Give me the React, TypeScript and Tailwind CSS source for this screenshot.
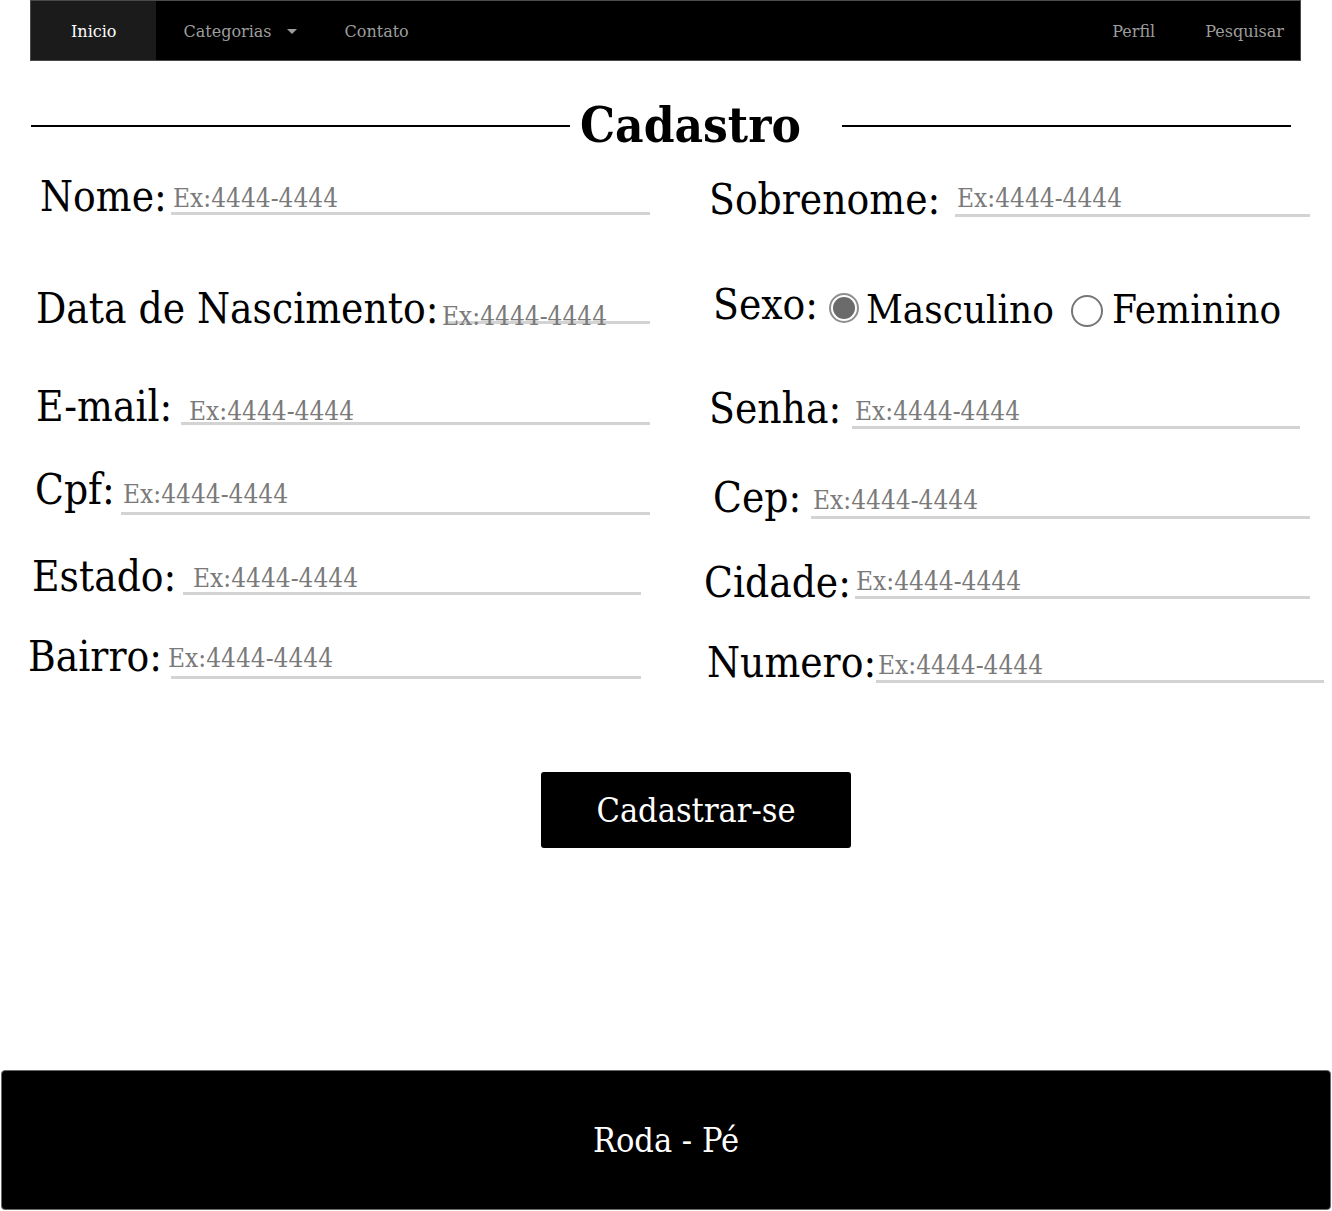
const serif = "font-['DejaVu_Serif',serif] [font-stretch:condensed]";

function Navbar() {
  return (
    <nav className="ml-[30px] flex h-[61px] w-[1271px] border border-[#4a4a4a] bg-black font-['DejaVu_Serif',serif] text-[16px] text-[#9d9d9d] [font-stretch:normal]">
      <a className="flex items-center bg-[#1b1b1b] px-[40px] pt-[2px] text-white">Inicio</a>
      <a className="ml-[27px] flex items-center pt-[2px]">
        Categorias
        <span className="ml-[15px] h-0 w-0 border-x-[5px] border-t-[5px] border-x-transparent border-t-[#9d9d9d]" />
      </a>
      <a className="ml-[48px] flex items-center pt-[2px]">Contato</a>
      <div className="ml-auto flex">
        <a className="flex items-center pt-[2px]">Perfil</a>
        <a className="ml-[50px] mr-[16px] flex items-center pt-[2px]">Pesquisar</a>
      </div>
    </nav>
  );
}

type FieldProps = {
  label: string;
  labelCls: string;
  inputCls: string;
  phCls: string;
};

function Field({ label, labelCls, inputCls, phCls }: FieldProps) {
  return (
    <div className="flex items-start">
      <span className={`shrink-0 whitespace-nowrap text-[42px] leading-[42px] text-black ${labelCls}`}>{label}</span>
      <div className={`h-[30px] shrink-0 border-b-[3px] border-[#d3d3d3] ${inputCls}`}>
        <span className={`block whitespace-nowrap text-[26px] leading-[26px] text-[#7a7a7a] ${phCls}`}>Ex:4444-4444</span>
      </div>
    </div>
  );
}

function Radio({ checked }: { checked?: boolean }) {
  if (checked) {
    return (
      <span className="flex h-[30px] w-[30px] items-center justify-center rounded-full border-2 border-[#8f8f8f] bg-white">
        <span className="h-[22px] w-[22px] rounded-full bg-[#6b6b6b]" />
      </span>
    );
  }
  return <span className="block h-[32px] w-[32px] rounded-full border-2 border-[#767676] bg-white" />;
}

export default function App() {
  return (
    <div className={`min-h-[1211px] bg-white ${serif}`}>
      <Navbar />

      <div className="flex h-[99px] items-start">
        <div className="mt-[40px] flex items-center">
          <span className="ml-[31px] h-[2px] w-[539px] bg-black" />
          <h1 className="ml-[10px] text-[49px] font-bold leading-[49px] text-black">Cadastro</h1>
          <span className="ml-[41px] h-[2px] w-[449px] bg-black" />
        </div>
      </div>

      <div className="flex flex-col">
        <div className="flex h-[110px]">
          <div className="w-[700px]">
            <Field label="Nome:" labelCls="ml-[40px] mt-[16px] w-[131px]" inputCls="mt-[25px] w-[479px]" phCls="ml-[2px]" />
          </div>
          <Field label="Sobrenome:" labelCls="ml-[9px] mt-[19px] w-[246px]" inputCls="mt-[27px] w-[355px]" phCls="ml-[2px] -mt-[2px]" />
        </div>

        <div className="flex h-[100px]">
          <div className="w-[700px]">
            <Field label="Data de Nascimento:" labelCls="ml-[36px] mt-[18px] w-[411px]" inputCls="mt-[24px] w-[203px]" phCls="-ml-[5px] mt-[9px]" />
          </div>
          <div className="flex items-start">
            <span className="ml-[13px] mt-[14px] w-[116px] shrink-0 text-[42px] leading-[42px] text-black">Sexo:</span>
            <span className="mt-[23px]">
              <Radio checked />
            </span>
            <span className="ml-[7px] mt-[19px] text-[40px] leading-[40px] text-black">Masculino</span>
            <span className="ml-[17px] mt-[25px]">
              <Radio />
            </span>
            <span className="ml-[9px] mt-[19px] text-[40px] leading-[40px] text-black">Feminino</span>
          </div>
        </div>

        <div className="flex h-[85px]">
          <div className="w-[700px]">
            <Field label="E-mail:" labelCls="ml-[36px] mt-[16px] w-[145px]" inputCls="mt-[25px] w-[469px]" phCls="ml-[8px] mt-[3px]" />
          </div>
          <Field label="Senha:" labelCls="ml-[9px] mt-[18px] w-[143px]" inputCls="mt-[29px] w-[448px]" phCls="ml-[3px] -mt-[1px]" />
        </div>

        <div className="flex h-[85px]">
          <div className="w-[700px]">
            <Field label="Cpf:" labelCls="ml-[35px] mt-[14px] w-[86px]" inputCls="mt-[30px] w-[529px]" phCls="ml-[2px] -mt-[4px]" />
          </div>
          <Field label="Cep:" labelCls="ml-[13px] mt-[22px] w-[98px]" inputCls="mt-[34px] w-[499px]" phCls="ml-[2px] -mt-[2px]" />
        </div>

        <div className="flex h-[85px]">
          <div className="w-[700px]">
            <Field label="Estado:" labelCls="ml-[32px] mt-[16px] w-[151px]" inputCls="mt-[25px] w-[458px]" phCls="ml-[10px]" />
          </div>
          <Field label="Cidade:" labelCls="ml-[4px] mt-[22px] w-[151px]" inputCls="mt-[29px] w-[455px]" phCls="ml-[1px] -mt-[1px]" />
        </div>

        <div className="flex h-[75px]">
          <div className="w-[700px]">
            <Field label="Bairro:" labelCls="ml-[28px] mt-[11px] w-[143px]" inputCls="mt-[24px] w-[470px]" phCls="-ml-[3px] -mt-[4px]" />
          </div>
          <Field label="Numero:" labelCls="ml-[7px] mt-[17px] w-[169px]" inputCls="mt-[28px] w-[448px]" phCls="ml-[2px] -mt-[1px]" />
        </div>
      </div>

      <button className="ml-[541px] mt-[72px] flex h-[76px] w-[310px] items-center justify-center rounded-[3px] bg-black text-[34px] text-white">
        Cadastrar-se
      </button>

      <footer className="ml-[1px] mt-[222px] flex h-[140px] w-[1330px] items-center justify-center rounded-[4px] border border-[#6a6a6a] bg-black text-[34px] text-white">
        Roda - Pé
      </footer>
    </div>
  );
}
